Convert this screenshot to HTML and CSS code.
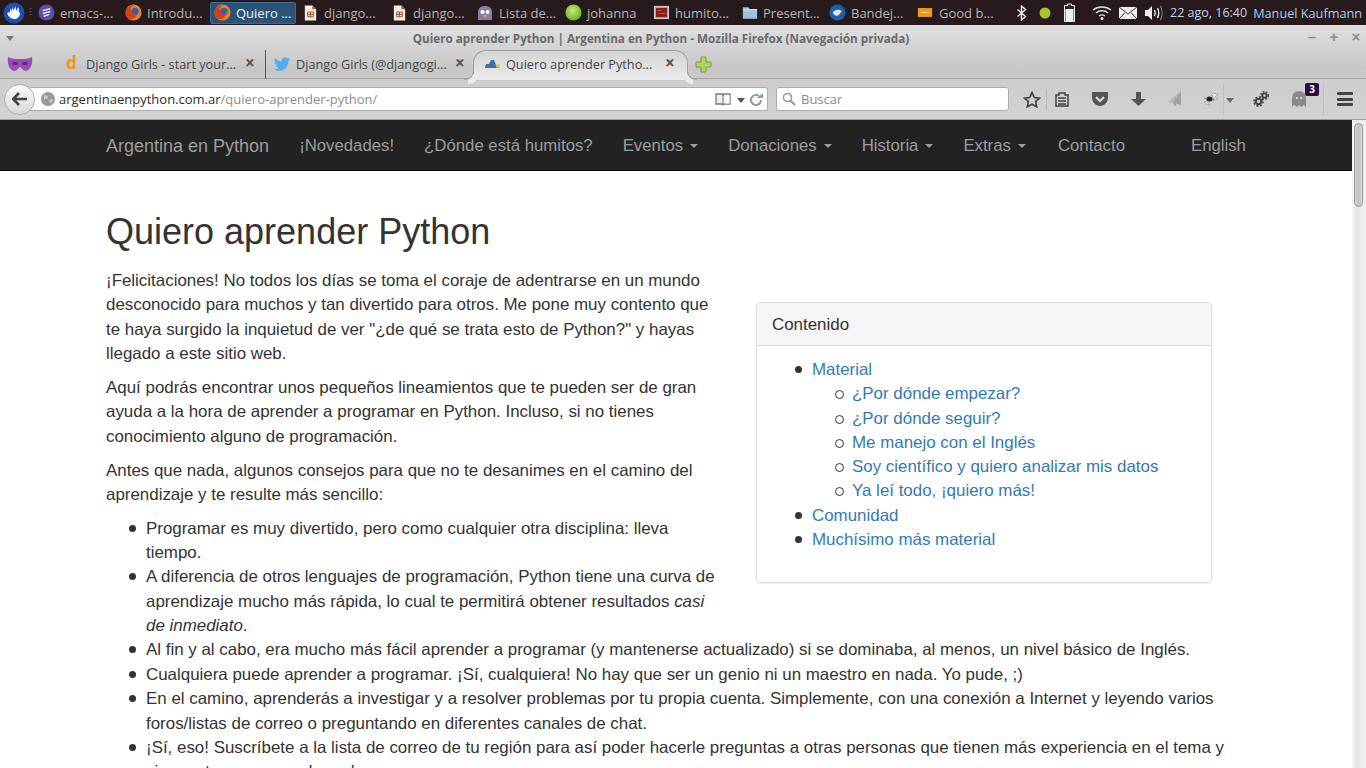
FILE: index.html
```html
<!DOCTYPE html>
<html lang="es">
<head>
<meta charset="utf-8">
<title>Quiero aprender Python</title>
<link rel="stylesheet" href="styles.css">
</head>
<body>
<div class="panelbar">
  <svg class="ic start" width="22" height="22" viewBox="0 0 22 22"><circle cx="11" cy="11" r="10.500" fill="#1b4fb0"/><path d="M4 11l3-1 .5-4 1 3 1.500-4 .5 4 2-5 .5 5 2.500-4 .5 5 1 1c0 4-3 6-6 6s-6-3-7-6z" fill="#fff"/></svg>
  <span class="grip"></span>
  <div class="task t1"><svg width="17" height="17" viewBox="0 0 18 18"><circle cx="9" cy="9" r="8.500" fill="#5a4fa0"/><path d="M5 7l8-2M5 10l8-2M6 13l6-2" stroke="#e8e4f5" stroke-width="1.500"/></svg><span>emacs-...</span></div>
  <div class="task t2"><svg width="17" height="17" viewBox="0 0 18 18"><circle cx="9" cy="9" r="8.500" fill="#e8821f"/><circle cx="10.500" cy="8" r="4" fill="#3b5fa8"/><path d="M1 7c1-4 5-6 9-6-3 1-4 3-4 5 0 3 3 6 7 5-2 5-7 6-10 4-2-2-3-5-2-8z" fill="#d8401c"/></svg><span>Introdu...</span></div>
  <div class="task t3 on"><svg width="17" height="17" viewBox="0 0 18 18"><circle cx="9" cy="9" r="8.500" fill="#e8821f"/><circle cx="10.500" cy="8" r="4" fill="#3b5fa8"/><path d="M1 7c1-4 5-6 9-6-3 1-4 3-4 5 0 3 3 6 7 5-2 5-7 6-10 4-2-2-3-5-2-8z" fill="#d8401c"/></svg><span>Quiero ...</span></div>
  <div class="task t4"><svg width="17" height="18" viewBox="0 0 18 18"><path d="M3 1h8l4 4v12H3z" fill="#f5f0e6"/><path d="M11 1l4 4h-4z" fill="#b8501f"/><path d="M6 8h6v5H6zM6 10.500h6M9 8v5" fill="none" stroke="#a5481c"/></svg><span>django...</span></div>
  <div class="task t5"><svg width="17" height="18" viewBox="0 0 18 18"><path d="M3 1h8l4 4v12H3z" fill="#f5f0e6"/><path d="M11 1l4 4h-4z" fill="#b8501f"/><path d="M6 8h6v5H6zM6 10.500h6M9 8v5" fill="none" stroke="#a5481c"/></svg><span>django...</span></div>
  <div class="task t6"><svg width="18" height="18" viewBox="0 0 18 18"><path d="M2 16V8c0-4 3-6 7-6s7 2 7 6v8z" fill="#8d7ba8"/><circle cx="6.500" cy="8" r="2" fill="#fff"/><circle cx="11.500" cy="8" r="2" fill="#fff"/><path d="M7 11h4l-2 3z" fill="#e8a030"/></svg><span>Lista de...</span></div>
  <div class="task t7"><svg width="17" height="17" viewBox="0 0 18 18"><defs><radialGradient id="g" cx=".45" cy=".4" r=".6"><stop offset="0" stop-color="#c9ec80"/><stop offset="1" stop-color="#6fae24"/></radialGradient></defs><circle cx="9" cy="9" r="8.500" fill="url(#g)"/></svg><span>johanna</span></div>
  <div class="task t8"><svg width="17" height="17" viewBox="0 0 18 18"><rect x="1" y="2" width="16" height="14" fill="#c4c4c4"/><rect x="3" y="4" width="12" height="10" fill="#8c1d1d"/><path d="M4 7h5M6 10h7" stroke="#d04a4a"/></svg><span>humito...</span></div>
  <div class="task t9"><svg width="16" height="17" viewBox="0 0 18 18"><path d="M1 3h6l2 2h8v11H1z" fill="#9fc0dc"/><path d="M1 6h16" stroke="#e5eef5"/></svg><span>Present...</span></div>
  <div class="task t10"><svg width="17" height="17" viewBox="0 0 18 18"><circle cx="9" cy="9" r="8.500" fill="#1d5fa8"/><path d="M4 9c2-3 7-4 10-1-2 0-2 3-4 4-2 1-5 0-6-3z" fill="#e8e8e8"/></svg><span>Bandej...</span></div>
  <div class="task t11"><svg width="16" height="17" viewBox="0 0 18 18"><rect x="1" y="4" width="16" height="10" fill="#f09a14"/><path d="M5 9h8" stroke="#ffe6b0"/></svg><span>Good b...</span></div>
  <div class="tray">
    <svg class="bt" width="11" height="16" viewBox="0 0 11 16"><path d="M1.500 4.500l8 7L5.500 15V1l4 3.500-8 7" fill="none" stroke="#eee" stroke-width="1.400"/></svg>
    <svg class="dot" width="12" height="12" viewBox="0 0 12 12"><circle cx="6" cy="6" r="5.500" fill="#a4c628"/></svg>
    <svg class="bat" width="11" height="19" viewBox="0 0 11 19"><path d="M3.500 1h4v1.500h3v16H.5V2.500h3z" fill="#2a2a2a" stroke="#eee"/><rect x="1.500" y="6" width="8" height="12" fill="#eee"/></svg>
    <svg class="wifi" width="20" height="15" viewBox="0 0 20 15"><path d="M1 5c5-4 13-4 18 0M4 8c3-3 9-3 12 0M7 11c2-1.500 4-1.500 6 0" fill="none" stroke="#ddd" stroke-width="1.400"/><circle cx="10" cy="13.500" r="1.500" fill="#eee"/></svg>
    <svg class="mail" width="18" height="12" viewBox="0 0 18 12"><rect width="18" height="12" fill="#eee"/><path d="M0 0l9 7 9-7M0 12l6-6.500M18 12l-6-6.500" fill="none" stroke="#333"/></svg>
    <svg class="vol" width="19" height="16" viewBox="0 0 19 16"><path d="M0 5h3l4-4v14l-4-4H0z" fill="#eee"/><path d="M9.500 5c1 2 1 4 0 6M12.500 3c1.500 3 1.500 7 0 10" fill="none" stroke="#eee" stroke-width="1.400"/><path d="M15.500 1c2 4 2 10 0 14" fill="none" stroke="#888" stroke-width="1.200"/></svg>
    <span class="clock">22 ago, 16:40</span>
    <span class="user">Manuel Kaufmann</span>
  </div>
</div>

<div class="chrome">
  <div class="titlebar">
    <span class="menu-arrow"></span>
    <span class="title">Quiero aprender Python | Argentina en Python - Mozilla Firefox (Navegación privada)</span>
    <span class="winbtns"><i>–</i><i>+</i><i>×</i></span>
  </div>
  <div class="tabbar">
    <svg class="mask" width="26" height="16" viewBox="0 0 26 16"><path d="M1 1c4 2 8 2 12 2s8 0 12-2c1 6-1 13-6 14-3 0-4-3-6-4-2 1-3 4-6 4C2 14 0 7 1 1z" fill="#9a4bb5"/><ellipse cx="8" cy="7.500" rx="3" ry="1.600" fill="#5d2a70"/><ellipse cx="18" cy="7.500" rx="3" ry="1.600" fill="#5d2a70"/></svg>
    <div class="tab tab1">
      <span class="fav-d">d</span><span class="tab-label">Django Girls - start your...</span><span class="tab-x">×</span>
    </div>
    <div class="tab tab2">
      <svg class="fav" width="16" height="14" viewBox="0 0 16 14"><path d="M16 2c-.6.300-1.200.5-1.900.6.700-.4 1.200-1 1.400-1.800-.6.400-1.300.6-2 .8C12.900.9 12 .5 11 .5 9.200.5 7.700 2 7.700 3.800c0 .3 0 .5.100.8C5 4.400 2.600 3.100 1 1.100.7 1.600.6 2.200.6 2.800c0 1.100.6 2.100 1.500 2.700-.5 0-1-.2-1.500-.4 0 1.600 1.100 2.900 2.600 3.200-.5.100-1 .2-1.500.1.400 1.300 1.600 2.300 3.100 2.300C3.300 12 1.400 12.500 0 12.400c1.500.9 3.200 1.500 5 1.500 6 0 9.300-5 9.300-9.300v-.4c.7-.5 1.200-1.100 1.700-1.700z" fill="#55acee"/></svg>
      <span class="tab-label">Django Girls (@djangogi...</span><span class="tab-x">×</span>
    </div>
    <div class="tab tab3">
      <svg class="fav" width="16" height="12" viewBox="0 0 16 12"><path d="M1 10l1-4h3l2-4h3l2 5h3v3z" fill="#3f6fa6"/><circle cx="14" cy="8" r="2" fill="#f0c040"/></svg>
      <span class="tab-label">Quiero aprender Pytho...</span><span class="tab-x">×</span>
    </div>
    <svg class="plus" width="17" height="17" viewBox="0 0 17 17"><path d="M6 1h5v5h5v5h-5v5H6v-5H1V6h5z" fill="#b5d35c" stroke="#7d9a38"/></svg>
  </div>
  <div class="navbar-ff">
    <div class="back"><svg width="16" height="14" viewBox="0 0 16 14"><path d="M7 1L1 7l6 6M1.500 7H15" fill="none" stroke="#444" stroke-width="2.600"/></svg></div>
    <div class="urlbar">
      <svg class="globe" width="14" height="14" viewBox="0 0 14 14"><circle cx="7" cy="7" r="7" fill="#999"/><path d="M3 3l4 1-1 3-3 0zM8 8l4-1-2 5z" fill="#ccc"/></svg>
      <span class="url"><b>argentinaenpython.com.ar</b>/quiero-aprender-python/</span>
      <svg class="book" width="16" height="13" viewBox="0 0 16 13"><path d="M1 1h6l1 1 1-1h6v10H9l-1 1-1-1H1z" fill="#eee" stroke="#777" stroke-width="1.300"/><path d="M10 2v8.500h4.500V2z" fill="#fff"/><path d="M8 2v9" stroke="#777"/></svg>
      <span class="drop"></span>
      <svg class="reload" width="13" height="13" viewBox="0 0 13 13"><path d="M11 7a5 5 0 1 1-2-4" fill="none" stroke="#8a9aa8" stroke-width="2"/><path d="M7 5h6V0z" fill="#8a9aa8"/></svg>
    </div>
    <div class="search">
      <svg width="14" height="14" viewBox="0 0 14 14"><circle cx="5.500" cy="5.500" r="4" fill="none" stroke="#999" stroke-width="1.600"/><path d="M8.500 8.500L13 13" stroke="#999" stroke-width="2.200"/></svg>
      <span>Buscar</span>
    </div>
    <div class="tools">
      <svg class="t-star" width="18" height="17" viewBox="0 0 18 17"><path d="M9 1.500l2.300 5 5.200.6-3.900 3.500 1.100 5.200L9 13.200l-4.700 2.600 1.100-5.200L1.500 7.100l5.200-.6z" fill="none" stroke="#444" stroke-width="1.700"/></svg>
      <span class="sep"></span>
      <svg class="t-clip" width="14" height="15" viewBox="0 0 14 15"><path d="M1 3h3V1h6v2h3v11H1z" fill="none" stroke="#444" stroke-width="1.500"/><path d="M3 6h8M3 9h8M3 12h8" stroke="#444" stroke-width="1.500"/></svg>
      <svg class="t-pocket" width="16" height="14" viewBox="0 0 16 14"><path d="M0 0h16v6c0 4-4 8-8 8S0 10 0 6z" fill="#555"/><path d="M4 5l4 4 4-4" fill="none" stroke="#ddd" stroke-width="2"/></svg>
      <svg class="t-down" width="15" height="14" viewBox="0 0 15 14"><path d="M5 0h5v7h5l-7.500 7L0 7h5z" fill="#555"/></svg>
      <svg class="t-plane" width="14" height="16" viewBox="0 0 14 16"><path d="M13 0L0 11l5 .5z" fill="#b4b4b4"/><path d="M13 0L5 11.500 7 16l1.500-3.500L13 14z" fill="#a0a0a0"/></svg>
      <svg class="t-bug" width="16" height="14" viewBox="0 0 16 14"><path d="M5 6L10 1l5 1-3 3 3 2-6 1zM4 9l3 4-4-1-2-2z" fill="#e8e8e8" stroke="#999" stroke-width=".7"/><ellipse cx="6.500" cy="7" rx="3" ry="2.500" fill="#222"/><path d="M9 3l2 6M1 6l3 1" stroke="#666" stroke-width=".8"/></svg>
      <span class="sep2"></span>
      <span class="drop d2"></span>
      <svg class="t-gear" width="16" height="16" viewBox="0 0 16 16"><g fill="none" stroke="#444"><circle cx="5.500" cy="10.500" r="2.700" stroke-width="2"/><circle cx="5.500" cy="10.500" r="4.500" stroke-width="1.500" stroke-dasharray="2 1.500"/><circle cx="11.500" cy="4.500" r="2.200" stroke-width="1.800"/><circle cx="11.500" cy="4.500" r="3.800" stroke-width="1.400" stroke-dasharray="1.800 1.300"/></g></svg>
      <div class="t-ghost">
        <svg width="14" height="16" viewBox="0 0 14 16"><path d="M0 16V7a7 7 0 0 1 14 0v9l-2.300-2-2.400 2L7 14l-2.300 2-2.400-2z" fill="#8a8a8a"/><circle cx="4.800" cy="7" r="1" fill="#eee"/><circle cx="9.200" cy="7" r="1" fill="#eee"/></svg>
        <span class="badge">3</span>
      </div>
      <span class="sep3"></span>
      <div class="burger"><i></i><i></i><i></i></div>
    </div>
  </div>
</div>

<div class="viewport">
  <div class="page">
    <nav class="sitenav">
      <a class="brand">Argentina en Python</a>
      <a>¡Novedades!</a>
      <a>¿Dónde está humitos?</a>
      <a class="caret">Eventos</a>
      <a class="caret">Donaciones</a>
      <a class="caret">Historia</a>
      <a class="caret">Extras</a>
      <a class="contact">Contacto</a>
      <a class="lang">English</a>
    </nav>
    <main class="content">
      <h1>Quiero aprender Python</h1>
      <aside class="toc">
        <div class="toc-head">Contenido</div>
        <div class="toc-body">
          <ul>
            <li><a>Material</a>
              <ul>
                <li><a>¿Por dónde empezar?</a></li>
                <li><a>¿Por dónde seguir?</a></li>
                <li><a>Me manejo con el Inglés</a></li>
                <li><a>Soy científico y quiero analizar mis datos</a></li>
                <li><a>Ya leí todo, ¡quiero más!</a></li>
              </ul>
            </li>
            <li><a>Comunidad</a></li>
            <li><a>Muchísimo más material</a></li>
          </ul>
        </div>
      </aside>
      <p>¡Felicitaciones! No todos los días se toma el coraje de adentrarse en un mundo desconocido para muchos y tan divertido para otros. Me pone muy contento que te haya surgido la inquietud de ver "¿de qué se trata esto de Python?" y hayas llegado a este sitio web.</p>
      <p>Aquí podrás encontrar unos pequeños lineamientos que te pueden ser de gran ayuda a la hora de aprender a programar en Python. Incluso, si no tienes conocimiento alguno de programación.</p>
      <p>Antes que nada, algunos consejos para que no te desanimes en el camino del aprendizaje y te resulte más sencillo:</p>
      <ul class="tips">
        <li>Programar es muy divertido, pero como cualquier otra disciplina: lleva tiempo.</li>
        <li>A diferencia de otros lenguajes de programación, Python tiene una curva de aprendizaje mucho más rápida, lo cual te permitirá obtener resultados <em>casi de inmediato</em>.</li>
        <li>Al fin y al cabo, era mucho más fácil aprender a programar (y mantenerse actualizado) si se dominaba, al menos, un nivel básico de Inglés.</li>
        <li>Cualquiera puede aprender a programar. ¡Sí, cualquiera! No hay que ser un genio ni un maestro en nada. Yo pude, ;)</li>
        <li>En el camino, aprenderás a investigar y a resolver problemas por tu propia cuenta. Simplemente, con una conexión a Internet y leyendo varios foros/listas de correo o preguntando en diferentes canales de chat.</li>
        <li>¡Sí, eso! Suscríbete a la lista de correo de tu región para así poder hacerle preguntas a otras personas que tienen más experiencia en el tema y sin que tengas pena de nada.</li>
      </ul>
    </main>
  </div>
  <div class="scrollbar"><div class="thumb"></div></div>
</div>
</body>
</html>
```
FILE: styles.css
```css
* { box-sizing: border-box; }
html, body { margin: 0; height: 100%; overflow: hidden; }
body { width: 1366px; height: 768px; display: flex; flex-direction: column; background: #fff; font-family: "Liberation Sans", sans-serif; }

.panelbar { height: 25px; flex: none; background: #261a1c; display: flex; align-items: center; font-family: "Open Sans", "DejaVu Sans", sans-serif; font-size: 13px; color: #b4b4b4; }
.panelbar svg { flex: none; }
.start { margin-left: 3px; }
.grip { flex: none; width: 3px; height: 9px; margin-left: 4px; background: repeating-linear-gradient(#4a4244 0 1px, transparent 1px 3px); }
.task { height: 22px; display: flex; align-items: center; flex: none; gap: 5px; white-space: nowrap; }
.t1 { margin-left: 6px; width: 87px; }
.t2 { width: 85px; }
.t3 { width: 86px; background: #2b5377; border: 1px solid #3d6a92; border-radius: 2px; color: #f0f0f0; padding-left: 3px; }
.t4 { margin-left: 6px; width: 89px; }
.t5 { width: 85px; }
.t6 { width: 89px; }
.t7 { width: 88px; }
.t8 { width: 89px; }
.t9 { width: 87px; }
.t10 { width: 88px; }
.t11 { width: 83px; gap: 6px; }
.tray { display: flex; align-items: center; flex: none; height: 25px; width: 366px; }
.bt { margin-left: 16px; }
.dot { margin-left: 12px; }
.bat { margin-left: 13px; }
.wifi { margin-left: 17px; }
.mail { margin-left: 7px; }
.vol { margin-left: 8px; }
.clock { margin-left: 6px; color: #c6d4e2; font-size: 12.5px; white-space: nowrap; }
.user { margin-left: 6px; color: #a9cbe6; font-size: 12.7px; white-space: nowrap; }

.chrome { flex: none; height: 95px; background: linear-gradient(#e0e0e0, #c6c6c6 45px, #cdcdcd 55px, #d2d2d2); border-bottom: 1px solid #9a9a9a; display: flex; flex-direction: column; }
.titlebar { height: 25px; flex: none; display: flex; align-items: center; position: relative; justify-content: center; padding-right: 44px; }
.title { font-family: "Open Sans", "DejaVu Sans", sans-serif; font-weight: 700; font-size: 11.7px; color: #6a6a6a; }
.menu-arrow { position: absolute; left: 6px; top: 11px; border: 4px solid transparent; border-top: 5px solid #777; border-bottom: 0; }
.winbtns { position: absolute; right: 4px; top: 3px; display: flex; gap: 10px; }
.winbtns i { font-style: normal; color: #8c8c8c; font-size: 15px; font-weight: 700; width: 12px; text-align: center; }

.tabbar { height: 29px; flex: none; display: flex; align-items: center; border-bottom: 1px solid #a2a2a2; font-family: "Open Sans", "DejaVu Sans", sans-serif; font-size: 12.7px; color: #444; }
.mask { margin-left: 7px; flex: none; }
.tab { height: 29px; display: flex; align-items: center; flex: none; position: relative; }
.tab1 { margin-left: 31px; width: 202px; padding-left: 2px; border-right: 1px solid #555; }
.tab2 { width: 208px; padding-left: 8px; }
.tab3 { width: 215px; height: 30px; align-self: flex-start; padding: 0 10px 3px; background: linear-gradient(#d4d4d4, #ebebeb); border: 1px solid #a2a2a2; border-bottom: 0; border-radius: 13px 13px 0 0; margin-left: -1px; }
.tab3::before, .tab3::after { content: ""; position: absolute; bottom: 0; width: 9px; height: 9px; }
.tab3::before { left: -10px; border-bottom-right-radius: 9px; border-right: 1px solid #a2a2a2; border-bottom: 1px solid #a2a2a2; box-shadow: 4px 4px 0 #ebebeb; }
.tab3::after { right: -10px; border-bottom-left-radius: 9px; border-left: 1px solid #a2a2a2; border-bottom: 1px solid #a2a2a2; box-shadow: -4px 4px 0 #ebebeb; }
.fav-d { color: #f6941e; font-weight: 700; font-size: 17px; width: 20px; margin-top: -3px; }
.fav { margin-right: 6px; flex: none; }
.tab-label { white-space: nowrap; }
.tab-x { position: absolute; font-size: 17px; font-weight: 700; color: #555; top: 3px; line-height: 20px; }
.tab1 .tab-x { left: 181px; }
.tab2 .tab-x { left: 189px; }
.tab3 .tab-x { left: 191px; top: 2px; }
.plus { margin-left: 7px; flex: none; }

.navbar-ff { flex: 1; display: flex; align-items: center; font-family: "Open Sans", "DejaVu Sans", sans-serif; }
.back { width: 31px; height: 31px; margin-left: 4px; flex: none; border-radius: 50%; background: linear-gradient(#fafafa, #d8d8d8); border: 1px solid #a8b0b8; display: flex; align-items: center; justify-content: center; position: relative; z-index: 1; }
.urlbar { width: 738px; height: 24px; margin-left: -5px; flex: none; background: #fff; border: 1px solid #adadad; border-left: 0; border-radius: 0 3px 3px 0; display: flex; align-items: center; padding-left: 11px; }
.globe { flex: none; }
.url { margin-left: 4px; font-size: 13px; color: #8d8d8d; white-space: nowrap; }
.url b { font-weight: 400; color: #2c2c2c; }
.book { margin-left: auto; flex: none; }
.drop { border: 4px solid transparent; border-top: 5px solid #555; border-bottom: 0; width: 0; height: 0; margin-left: 6px; margin-top: 2px; flex: none; }
.reload { margin-left: 5px; margin-right: 4px; flex: none; }
.search { width: 233px; height: 24px; margin-left: 8px; flex: none; background: #fff; border: 1px solid #adadad; border-radius: 3px; display: flex; align-items: center; padding-left: 5px; font-size: 13px; color: #8a8a8a; gap: 5px; }
.tools { display: flex; align-items: center; flex: 1; height: 31px; }
.tools > * { flex: none; }
.t-star { margin-left: 14px; }
.sep { margin-left: 5px; width: 1px; height: 20px; background: #b4bcc2; }
.t-clip { margin-left: 8px; }
.t-pocket { margin-left: 23px; }
.t-down { margin-left: 23px; }
.t-plane { margin-left: 22px; }
.t-bug { margin-left: 21px; }
.sep2 { margin-left: 4px; width: 1px; height: 31px; background: #c0c0c0; }
.tools .d2 { margin-left: 2px; border-top-color: #666; }
.t-gear { margin-left: 19px; }
.t-ghost { margin-left: 23px; width: 14px; height: 16px; position: relative; }
.t-ghost svg { display: block; }
.badge { position: absolute; left: 13px; top: -8px; width: 14px; height: 13px; background: #2b0a3d; border-radius: 2px; color: #fff; font-size: 10px; font-weight: 700; line-height: 13px; text-align: center; }
.sep3 { margin-left: 17px; width: 1px; height: 31px; background: #c0c0c0; }
.burger { margin-left: 13px; width: 16px; display: flex; flex-direction: column; gap: 2.500px; }
.burger i { display: block; height: 3px; background: #444; border-radius: 1px; }

.viewport { flex: 1; display: flex; min-height: 0; overflow: hidden; }
.page { flex: 1; min-width: 0; overflow: hidden; font-size: 16.92px; line-height: 24.3px; color: #333; }
.sitenav { height: 51px; background: #222; border-bottom: 1px solid #080808; display: flex; align-items: center; padding: 2px 0 0 106px; color: #9d9d9d; font-size: 16.75px; white-space: nowrap; }
.sitenav a { margin-right: 30px; }
.sitenav .brand { font-size: 18px; }
.sitenav .contact { margin-left: 2px; }
.caret::after { content: ""; display: inline-block; margin-left: 7px; vertical-align: middle; border: 4px solid transparent; border-top-color: #9d9d9d; border-bottom: 0; }
.sitenav .lang { margin-left: 36px; margin-right: 0; }
.content { padding: 0 126px 0 106px; }
h1 { margin: 41px 0 17px; font-size: 36px; font-weight: 500; line-height: 40px; color: #333; }
p { margin: 0 0 10px; }
.toc { float: right; width: 456px; height: 281px; margin: 33px 14px 20px 40px; border: 1px solid #ddd; border-radius: 4px; box-shadow: 0 1px 1px rgba(0,0,0,.05); }
.toc-head { height: 43px; background: #f5f5f5; border-bottom: 1px solid #ddd; padding: 10px 15px 8px; color: #333; border-radius: 3px 3px 0 0; }
.toc-body { padding: 12px 15px 15px; }
.toc ul { margin: 0; padding-left: 40px; list-style: none; }
.toc a { color: #337ab7; }
.tips { margin: -1px 0 0; padding-left: 40px; list-style: none; line-height: 24.36px; }
.toc li, .tips li { position: relative; }
.toc li::before, .tips li::before { content: ""; position: absolute; left: -17px; top: 8px; width: 7px; height: 7px; border-radius: 50%; background: #333; }
.toc li li::before { background: transparent; border: 1px solid #333; }

.scrollbar { width: 14px; flex: none; background: linear-gradient(90deg, #f8f8f8, #e6e6e6 30%, #f0f0f0); padding: 3px 3px 0 2px; }
.thumb { height: 84px; border: 1px solid #9c9c9c; border-radius: 5px; background: linear-gradient(90deg, #d0d0d0, #c4c4c4 50%, #d4d4d4); }
```
